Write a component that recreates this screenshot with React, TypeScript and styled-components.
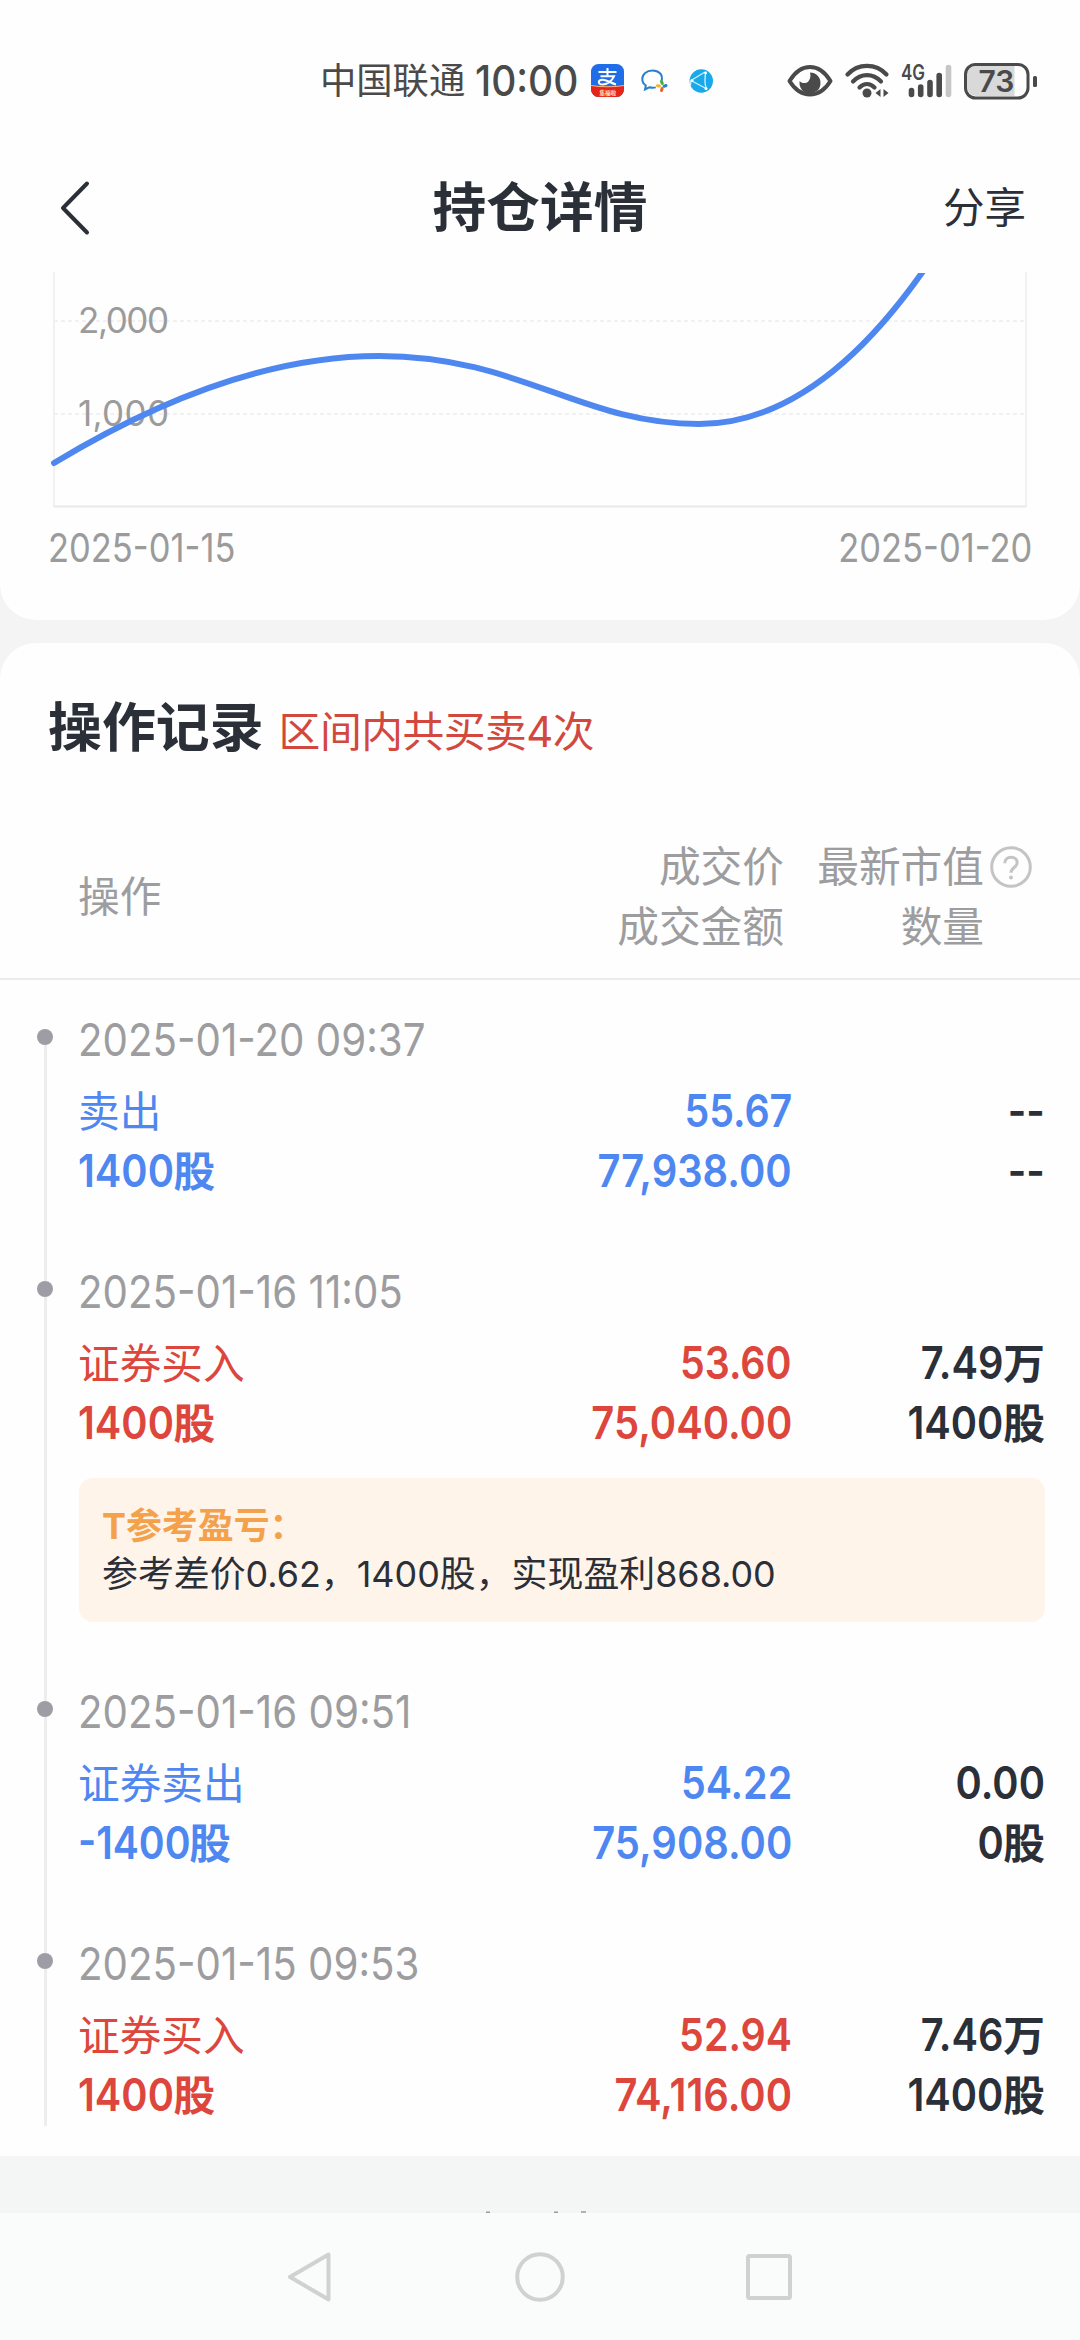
import React from "react";
import styled, { createGlobalStyle } from "styled-components";

const INK = "#2b2f38";
const BLUE = "#4f87f0";
const RED = "#dc463d";
const GREY = "#9d9da0";
const FONT = `Inter, "Noto Sans CJK SC", sans-serif`;

const Global = createGlobalStyle`
  * { box-sizing: border-box; }
  body { margin: 0; background: #f4f4f4; }
`;

const Screen = styled.div`
  width: 1080px;
  height: 2340px;
  display: flex;
  flex-direction: column;
  overflow: hidden;
  background: #f4f4f4;
  font-family: ${FONT};
  color: ${INK};
  white-space: nowrap;
`;

/* Condensed numerals, anchored to the side they are aligned to. */
const Num = styled.span<{ $size?: number; $scale?: number; $from?: "left" | "right"; $tuck?: number }>`
  display: inline-block;
  font-size: ${(p) => p.$size ?? 45}px;
  line-height: 1;
  transform: scaleX(${(p) => p.$scale ?? 0.895});
  transform-origin: ${(p) => p.$from ?? "left"} center;
  margin-right: ${(p) => -(p.$tuck ?? 0)}px;
`;

/* ---------- status bar ---------- */
const StatusBar = styled.div`
  flex: none;
  height: 161px;
  padding: 0 43px 0 320px;
  display: flex;
  align-items: center;
  background: #fefefe;
  color: #4a4a4a;
`;
const Carrier = styled.span`
  width: 155px;
  font-size: 36.3px;
  line-height: 60px;
`;
const Clock = styled.span`
  width: 116px;
  height: 60px;
  display: flex;
  align-items: center;
  font-weight: 500;
`;
const AppIcons = styled.div`
  display: flex;
  align-items: center;
  gap: 17px;
`;
const SystemIcons = styled.div`
  margin-left: auto;
  display: flex;
  align-items: center;
  gap: 12px;
`;
const Icon = styled.svg`
  display: block;
  flex: none;
  overflow: visible;
`;

/* ---------- title bar ---------- */
const TitleBar = styled.header`
  flex: none;
  height: 111px;
  padding: 1px 54px 18px;
  display: grid;
  grid-template-columns: 1fr auto 1fr;
  align-items: center;
  background: #fefefe;
`;
const BackButton = styled.div`
  padding-left: 5px;
`;
const PageTitle = styled.h1`
  margin: 0;
  font-size: 53.7px;
  font-weight: 700;
  line-height: 92px;
`;
const Share = styled.span`
  justify-self: end;
  font-size: 41.5px;
  line-height: 92px;
`;

/* ---------- chart ---------- */
const ChartCard = styled.section`
  flex: none;
  height: 348px;
  border-radius: 0 0 36px 36px;
  background: #fefefe;
`;
const AxisLabel = styled.text`
  font-family: ${FONT};
  font-size: 35px;
  fill: #9b9b9b;
`;
const Dates = styled.div`
  height: 78px;
  display: flex;
  align-items: center;
  justify-content: space-between;
  padding: 0 48px;
  color: #9b9b9b;
`;

/* ---------- records ---------- */
const RecordsCard = styled.section`
  flex: none;
  margin-top: 23px;
  height: 1513px;
  border-radius: 36px 36px 0 0;
  background: #fefefe;
`;
const Heading = styled.div`
  height: 114px;
  display: flex;
  align-items: baseline;
  gap: 15px;
  padding: 55px 0 0 48px;
  line-height: 60px;
`;
const HeadingTitle = styled.h2`
  margin: 0;
  font-size: 53.9px;
  font-weight: 700;
`;
const HeadingCount = styled.span`
  font-size: 41.8px;
  letter-spacing: -0.5px;
  color: #d2483f;
`;
const TableHead = styled.div`
  margin-top: 79px;
  height: 144px;
  padding: 1px 0 21px 78px;
  display: grid;
  grid-template-columns: 1fr 300px 200px 96px;
  border-bottom: 2px solid #ebebec;
  font-size: 41.7px;
  line-height: 60px;
  color: ${GREY};
`;
const HeadCell = styled.div<{ $align?: "left" | "right" }>`
  display: flex;
  flex-direction: column;
  justify-content: center;
  text-align: ${(p) => p.$align ?? "right"};
`;
const HelpCell = styled.div`
  display: flex;
  align-items: center;
  height: 60px;
  padding-left: 6px;
`;
const Entries = styled.div`
  padding-top: 30px;
`;
const Entry = styled.article`
  display: flex;
  padding-right: 35px;
`;
const Rail = styled.div`
  width: 78px;
  padding-left: 12px;
  display: flex;
  flex-direction: column;
  align-items: center;
`;
const RailLine = styled.div<{ $lead?: boolean; $hidden?: boolean }>`
  width: 3px;
  ${(p) => (p.$lead ? "height: 19px;" : "flex: 1;")}
  background: ${(p) => (p.$hidden ? "transparent" : "#ededee")};
`;
const RailDot = styled.div`
  width: 16px;
  height: 16px;
  border-radius: 50%;
  background: #9e9da5;
`;
const EntryBody = styled.div<{ $last?: boolean }>`
  flex: 1;
  padding-bottom: ${(p) => (p.$last ? 0 : 60)}px;
`;
const Time = styled.div`
  height: 60px;
  margin-bottom: 12px;
  font-size: 45px;
  line-height: 60px;
  color: ${GREY};
`;
const Cells = styled.div<{ $color: string }>`
  display: grid;
  grid-template-columns: 1fr 300px 253px;
  grid-auto-rows: 60px;
  font-size: 41.7px;
  line-height: 60px;
  color: ${(p) => p.$color};
`;
const Action = styled.span``;
const Strong = styled.span`
  font-weight: 600;
`;
const Amount = styled(Strong)`
  text-align: right;
`;
const Holding = styled(Amount)`
  color: ${INK};
`;
const Unit = styled.span`
  font-weight: 700;
`;
const Note = styled.div`
  margin: 24px 0 0 1px;
  height: 144px;
  padding: 24px 23px;
  border-radius: 14px;
  background: #fff4ea;
  font-size: 35.9px;
  line-height: 48px;
`;
const NoteTitle = styled.div`
  font-weight: 700;
  color: #f3a14a;
`;

/* ---------- bottom ---------- */
const FooterStrip = styled.div`
  flex: none;
  height: 57px;
  display: flex;
  align-items: flex-end;
  justify-content: center;
  background: #f4f5f5;
`;
const NavBar = styled.nav`
  flex: none;
  height: 127px;
  display: flex;
  align-items: center;
  justify-content: center;
  gap: 178px;
  background: #fafcfb;
`;

type Record = {
  time: string;
  kind: "buy" | "sell";
  action: string;
  shares: string;
  price: string;
  total: string;
  value: [string, string];
  held: [string, string];
  note?: string;
};

const records: Record[] = [
  { time: "2025-01-20 09:37", kind: "sell", action: "卖出", shares: "1400", price: "55.67", total: "77,938.00", value: ["--", ""], held: ["--", ""] },
  { time: "2025-01-16 11:05", kind: "buy", action: "证券买入", shares: "1400", price: "53.60", total: "75,040.00", value: ["7.49", "万"], held: ["1400", "股"], note: "参考差价0.62，1400股，实现盈利868.00" },
  { time: "2025-01-16 09:51", kind: "sell", action: "证券卖出", shares: "-1400", price: "54.22", total: "75,908.00", value: ["0.00", ""], held: ["0", "股"] },
  { time: "2025-01-15 09:53", kind: "buy", action: "证券买入", shares: "1400", price: "52.94", total: "74,116.00", value: ["7.46", "万"], held: ["1400", "股"] },
];

function StatusIcons() {
  return (
    <SystemIcons>
      <Icon width="46" height="34" viewBox="0 0 46 34">
        <path d="M2.5 17C8 8 15 3 23 3s15 5 20.500 14C38 26 31 30.500 23 30.500S8 26 2.500 17Z" fill="none" stroke="#4a4a4a" strokeWidth="4" strokeLinejoin="round" />
        <path d="M23 8.500a10.500 10.500 0 1 1-10.300 8.500c2 2.600 6.300 2.700 8.600.4 2.400-2.500 2.500-6.300 1.700-8.900Z" fill="#4a4a4a" />
      </Icon>
      <Icon width="44" height="35" viewBox="0 0 44 35">
        <g fill="none" stroke="#4a4a4a" strokeWidth="4.200" strokeLinecap="round">
          <path d="M2.500 11.500C13 0 31 0 41.500 11.500" />
          <path d="M8 18.500c8-8.500 20-8.500 28 0" />
          <path d="M14.500 24.500c4.500-4.500 10.500-4.500 15 0" />
        </g>
        <circle cx="22" cy="30" r="4.500" fill="#4a4a4a" />
        <path d="M35.500 26v8l-5-4ZM38.500 26v8l5-4Z" fill="#4a4a4a" />
      </Icon>
      <Icon width="51" height="35" viewBox="0 0 51 35">
        <text x="0" y="17" fontFamily="Inter, sans-serif" fontSize="21" fontWeight="600" textLength="24" lengthAdjust="spacingAndGlyphs" fill="#4a4a4a">4G</text>
        <g stroke="#4a4a4a" strokeWidth="5.600" strokeLinecap="round">
          <path d="M10.500 27.500V31.500M19.700 24V31.500M29 19.500V31.500M38.200 12.500V31.500" />
          <path d="M47.500 4.500V31.500" stroke="#c6c6c6" />
        </g>
      </Icon>
      <Icon width="73" height="36" viewBox="0 0 73 36">
        <path d="M12 3h38.500v30H12a9 9 0 0 1-9-9V12a9 9 0 0 1 9-9Z" fill="#d9d9d9" />
        <rect x="1.500" y="1.500" width="62.500" height="33.500" rx="10" fill="none" stroke="#4a4a4a" strokeWidth="3" />
        <rect x="69" y="13" width="4" height="11" rx="1.500" fill="#4a4a4a" />
        <text x="14.500" y="29" fontFamily="Inter, sans-serif" fontSize="30" fontWeight="600" fill="#4a4a4a">73</text>
      </Icon>
    </SystemIcons>
  );
}

function NotificationIcons() {
  return (
    <AppIcons>
      <Icon width="33" height="33" viewBox="0 0 33 33">
        <rect width="33" height="33" rx="7.500" fill="#1f6ee8" />
        <path d="M0 21.500q16.500 2.500 33 0v4A7.500 7.500 0 0 1 25.500 33h-18A7.500 7.500 0 0 1 0 25.500Z" fill="#e5251c" />
        <path d="M0 21q16.500 2.500 33 0v1q-16.500 2.500-33 0Z" fill="#ffb27a" />
        <path d="M7.500 8h18M16.500 4v8M9.500 12.300h13.500c-2 4.500-7 8.200-11.500 8.200-5 0-5-5 .300-4.700 5 .3 8 3.200 13.200 4.700" fill="none" stroke="#fff" strokeWidth="2" />
        <text x="8.500" y="30.500" fontFamily='"Noto Sans CJK SC", sans-serif' fontSize="5.500" fontWeight="700" fill="#ffe2c8">集福啦</text>
      </Icon>
      <Icon width="27" height="24" viewBox="0 0 27 24">
        <path d="M20.500 12C22.500 5.500 17.500 1.500 11.500 1.500S1.300 5.300 1.300 10c0 2.800 1.300 5 3.500 6.500L4 20.500l4.300-2.200c2 .6 4.700.6 6.500.1" fill="none" stroke="#2b7fd0" strokeWidth="2" />
        <g fill="none" strokeWidth="3" strokeLinecap="round">
          <path d="M20.500 12.500l.8 2" stroke="#45b035" />
          <path d="M25 16.500l-2 .8" stroke="#2b7fd0" />
          <path d="M16.500 16.800l2 .3" stroke="#f0b429" />
          <path d="M20.500 21.500l.6-2" stroke="#e8632b" />
        </g>
      </Icon>
      <Icon width="24" height="24" viewBox="0 0 24 24">
        <circle cx="16.300" cy="12" r="11.700" fill="#17a9ea" />
        <path d="M6 11.500 20 3M6 11.500 22 20M21 2.500c-1.500 6-1.500 12 .5 18.500M6 11.500l-.5 5" fill="none" stroke="#d4f1fc" strokeWidth="1.300" />
        <circle cx="7" cy="11.500" r="1.500" fill="#fff" />
        <circle cx="20.500" cy="4" r="1.300" fill="#fff" />
        <circle cx="21" cy="19.500" r="1.500" fill="#fff" />
      </Icon>
    </AppIcons>
  );
}

function ProfitChart() {
  return (
    <Icon width="1080" height="236" viewBox="0 272 1080 236">
      <g stroke="#f1f1f2" strokeWidth="2" fill="none">
        <path d="M54 272V507M1026 272V507" />
        <path d="M54 321H1026M54 414H1026" strokeDasharray="4 3" />
        <path d="M54 506.500H1026" stroke="#e8e8e9" />
      </g>
      <AxisLabel x="78" y="333" textLength="91">2,000</AxisLabel>
      <AxisLabel x="78" y="426" textLength="91">1,000</AxisLabel>
      <clipPath id="plot"><rect x="50" y="273" width="980" height="240" /></clipPath>
      <path
        clipPath="url(#plot)"
        d="M54 463C150 405 262 356 379 356C520 356 580 424 699 424C790 424 865 355 926 267"
        fill="none"
        stroke={BLUE}
        strokeWidth="6"
        strokeLinecap="round"
      />
    </Icon>
  );
}

export default function App() {
  return (
    <Screen>
      <Global />
      <StatusBar>
        <Carrier>中国联通</Carrier>
        <Clock><Num $size={43} $scale={0.905}>10:00</Num></Clock>
        <NotificationIcons />
        <StatusIcons />
      </StatusBar>

      <TitleBar>
        <BackButton>
          <Icon width="32" height="54" viewBox="0 0 32 54">
            <path d="M28 2.500 4 27 28 51.500" fill="none" stroke={INK} strokeWidth="4" strokeLinecap="round" strokeLinejoin="round" />
          </Icon>
        </BackButton>
        <PageTitle>持仓详情</PageTitle>
        <Share>分享</Share>
      </TitleBar>

      <ChartCard>
        <ProfitChart />
        <Dates>
          <Num $size={39} $scale={0.885}>2025-01-15</Num>
          <Num $size={39} $scale={0.885} $from="right">2025-01-20</Num>
        </Dates>
      </ChartCard>

      <RecordsCard>
        <Heading>
          <HeadingTitle>操作记录</HeadingTitle>
          <HeadingCount>区间内共买卖4次</HeadingCount>
        </Heading>
        <TableHead>
          <HeadCell $align="left"><span>操作</span></HeadCell>
          <HeadCell><span>成交价</span><span>成交金额</span></HeadCell>
          <HeadCell><span>最新市值</span><span>数量</span></HeadCell>
          <HelpCell>
            <Icon width="42" height="42" viewBox="0 0 42 42">
              <circle cx="21" cy="21" r="19.300" fill="none" stroke="#c4c4c6" strokeWidth="3" />
              <path d="M14.800 17.200c0-3.800 2.700-6 6.200-6s6.200 2.200 6.200 5.500c0 4.800-6.200 4.800-6.200 10" fill="none" stroke="#c4c4c6" strokeWidth="3" />
              <circle cx="21" cy="31.500" r="2" fill="#c4c4c6" />
            </Icon>
          </HelpCell>
        </TableHead>
        <Entries>
          {records.map((r, i) => {
            const last = i === records.length - 1;
            const signed = r.shares.length > 4;
            return (
              <Entry key={r.time}>
                <Rail>
                  <RailLine $lead $hidden={i === 0} />
                  <RailDot />
                  <RailLine />
                </Rail>
                <EntryBody $last={last}>
                  <Time><Num>{r.time}</Num></Time>
                  <Cells $color={r.kind === "buy" ? RED : BLUE}>
                    <Action>{r.action}</Action>
                    <Amount><Num $from="right" $scale={0.875}>{r.price}</Num></Amount>
                    <Holding><Num $from="right" $scale={0.885}>{r.value[0]}</Num><Unit>{r.value[1]}</Unit></Holding>
                    <Strong><Num $scale={signed ? 0.87 : 0.885} $tuck={signed ? 18 : 13}>{r.shares}</Num><Unit>股</Unit></Strong>
                    <Amount><Num $from="right" $scale={0.888}>{r.total}</Num></Amount>
                    <Holding><Num $from="right" $scale={0.885}>{r.held[0]}</Num><Unit>{r.held[1]}</Unit></Holding>
                  </Cells>
                  {r.note && (
                    <Note>
                      <NoteTitle>T参考盈亏：</NoteTitle>
                      <div>{r.note}</div>
                    </Note>
                  )}
                </EntryBody>
              </Entry>
            );
          })}
        </Entries>
      </RecordsCard>

      <FooterStrip>
        <Icon width="110" height="2" viewBox="0 0 110 2">
          <path d="M1 1.200h4M69 1.200h4M96 1h5" stroke="#9a9a9a" strokeWidth="1.600" />
        </Icon>
      </FooterStrip>
      <NavBar>
        <Icon width="52" height="52" viewBox="0 0 52 52">
          <path d="M44.500 3.500v45L6 26Z" fill="none" stroke="#d0d1d1" strokeWidth="4" strokeLinejoin="round" />
        </Icon>
        <Icon width="52" height="52" viewBox="0 0 52 52">
          <circle cx="26" cy="26" r="22.800" fill="none" stroke="#d0d1d1" strokeWidth="4" />
        </Icon>
        <Icon width="52" height="52" viewBox="0 0 52 52">
          <rect x="4" y="5" width="42" height="42" rx="1.500" fill="none" stroke="#d0d1d1" strokeWidth="4" />
        </Icon>
      </NavBar>
    </Screen>
  );
}
